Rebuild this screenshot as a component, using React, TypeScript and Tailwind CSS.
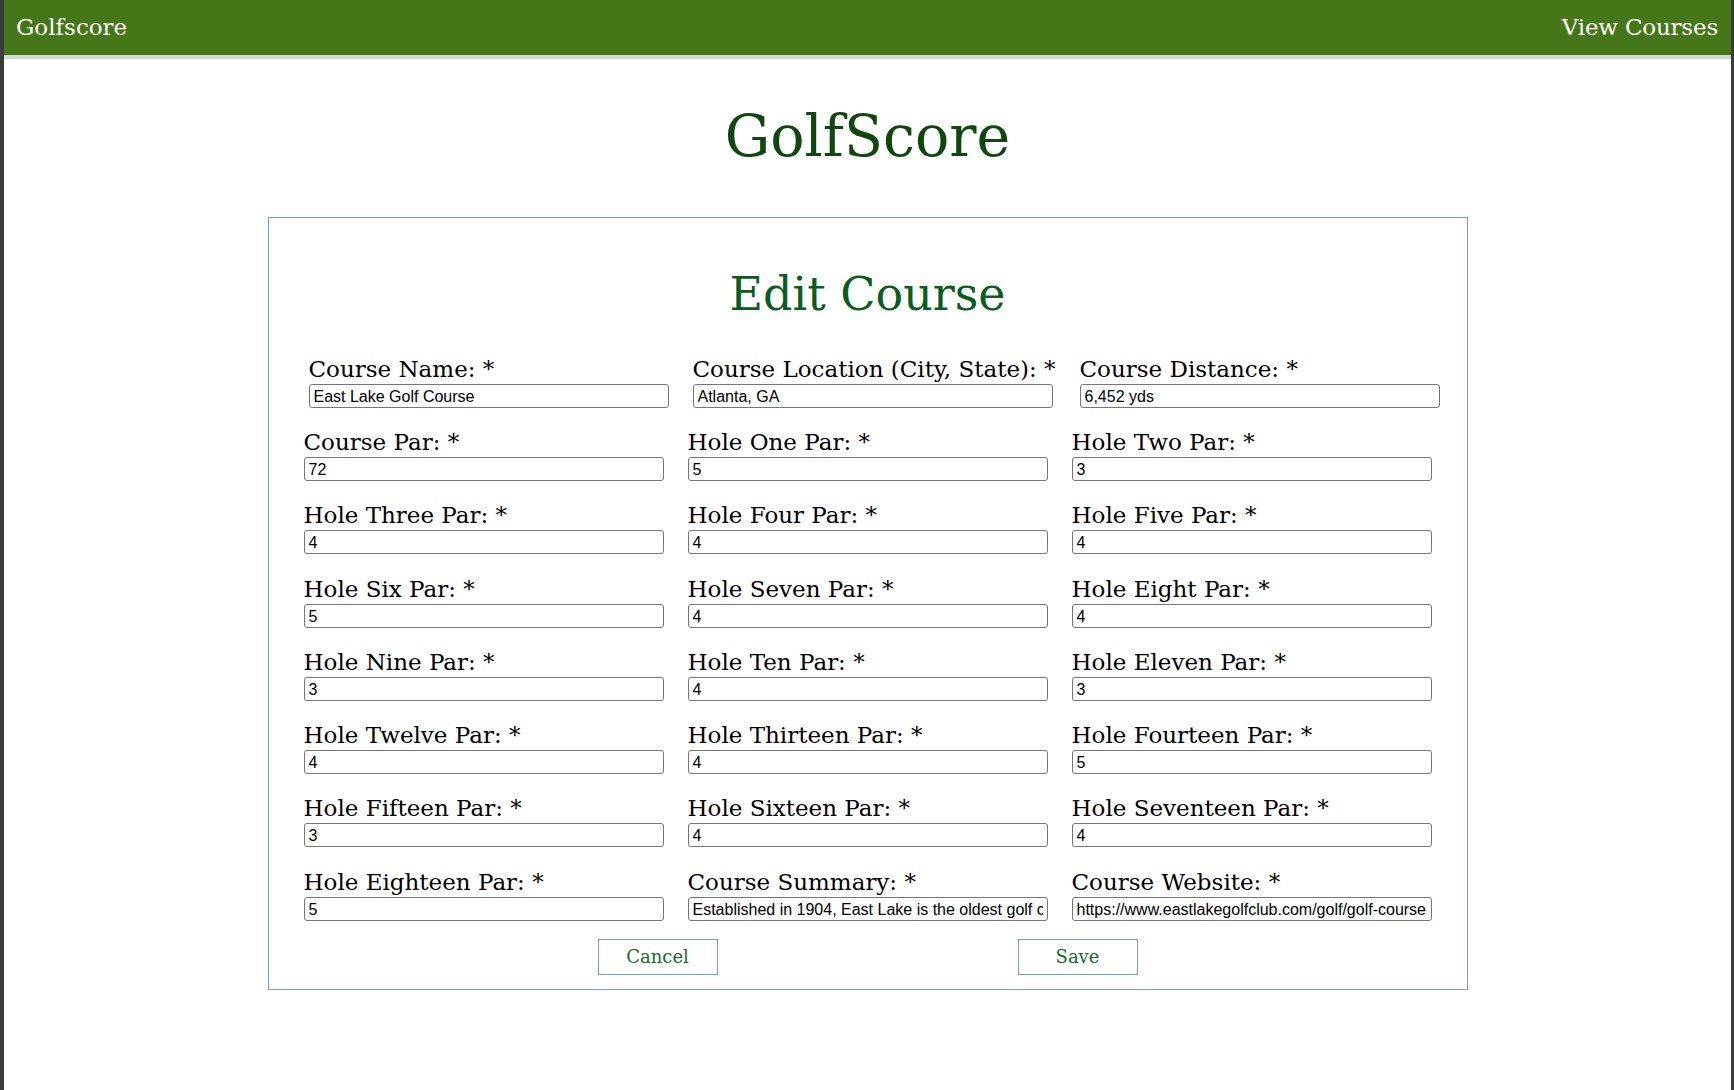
import React from 'react';

interface Field {
  label: string;
  value: string;
}

const topRow: Field[] = [
  { label: 'Course Name: *', value: 'East Lake Golf Course' },
  { label: 'Course Location (City, State): *', value: 'Atlanta, GA' },
  { label: 'Course Distance: *', value: '6,452 yds' },
];

const fields: Field[] = [
  { label: 'Course Par: *', value: '72' },
  { label: 'Hole One Par: *', value: '5' },
  { label: 'Hole Two Par: *', value: '3' },
  { label: 'Hole Three Par: *', value: '4' },
  { label: 'Hole Four Par: *', value: '4' },
  { label: 'Hole Five Par: *', value: '4' },
  { label: 'Hole Six Par: *', value: '5' },
  { label: 'Hole Seven Par: *', value: '4' },
  { label: 'Hole Eight Par: *', value: '4' },
  { label: 'Hole Nine Par: *', value: '3' },
  { label: 'Hole Ten Par: *', value: '4' },
  { label: 'Hole Eleven Par: *', value: '3' },
  { label: 'Hole Twelve Par: *', value: '4' },
  { label: 'Hole Thirteen Par: *', value: '4' },
  { label: 'Hole Fourteen Par: *', value: '5' },
  { label: 'Hole Fifteen Par: *', value: '3' },
  { label: 'Hole Sixteen Par: *', value: '4' },
  { label: 'Hole Seventeen Par: *', value: '4' },
  { label: 'Hole Eighteen Par: *', value: '5' },
  {
    label: 'Course Summary: *',
    value: 'Established in 1904, East Lake is the oldest golf course in Atlanta.',
  },
  {
    label: 'Course Website: *',
    value: 'https://www.eastlakegolfclub.com/golf/golf-course-history',
  },
];

const FormField: React.FC<{ field: Field }> = ({ field }) => (
  <div className="flex flex-col w-[360px]">
    <label className="block h-[29px] leading-[29px] text-[23px] text-black whitespace-nowrap">
      {field.label}
    </label>
    <input
      type="text"
      defaultValue={field.value}
      className="h-[24px] w-full border border-[#767676] rounded-[3px] px-[4px] pt-[2px] text-[16px] text-black bg-white font-['Liberation_Sans',Arial,sans-serif] focus:outline-none"
    />
  </div>
);

export default function App() {
  return (
    <div className="min-h-screen bg-white border-l-4 border-r-[3px] border-[#3b3b3b] font-['DejaVu_Serif',serif]">
      {/* Top nav */}
      <nav className="h-[55px] bg-[#457617] flex items-center justify-between pl-3 pr-[13px] text-white text-[23px]">
        <a href="#" className="leading-none">Golfscore</a>
        <a href="#" className="leading-none tracking-[-0.2px]">View Courses</a>
      </nav>
      <div className="h-[4px] bg-[#cfd8d1]" />

      <h1 className="mt-[44px] text-center text-[57px] leading-[66px] text-[#0f470f]">GolfScore</h1>

      {/* Edit card */}
      <div className="mx-auto mt-[48px] w-[1200px] border border-[#72a0c8] pt-[49px] pb-[14px]">
        <h2 className="text-center text-[46px] leading-[54px] text-[#0b5c1f]">Edit Course</h2>

        <div className="mt-[34px] flex pl-[40px]">
          <FormField field={topRow[0]} />
          <div className="ml-[24px]">
            <FormField field={topRow[1]} />
          </div>
          <div className="ml-[27px]">
            <FormField field={topRow[2]} />
          </div>
        </div>

        <div className="mt-[20px] pl-[35px] grid grid-cols-[360px_360px_360px] gap-x-6 gap-y-[20.3px]">
          {fields.map((f) => (
            <FormField key={f.label} field={f} />
          ))}
        </div>

        <div className="mt-[18px] flex justify-center gap-[300px]">
          <button
            type="button"
            className="w-[120px] h-[36px] border border-[#72a0c8] bg-white text-[18px] text-[#1a6a2b]"
          >
            Cancel
          </button>
          <button
            type="button"
            className="w-[120px] h-[36px] border border-[#72a0c8] bg-white text-[18px] text-[#1a6a2b]"
          >
            Save
          </button>
        </div>
      </div>
    </div>
  );
}
